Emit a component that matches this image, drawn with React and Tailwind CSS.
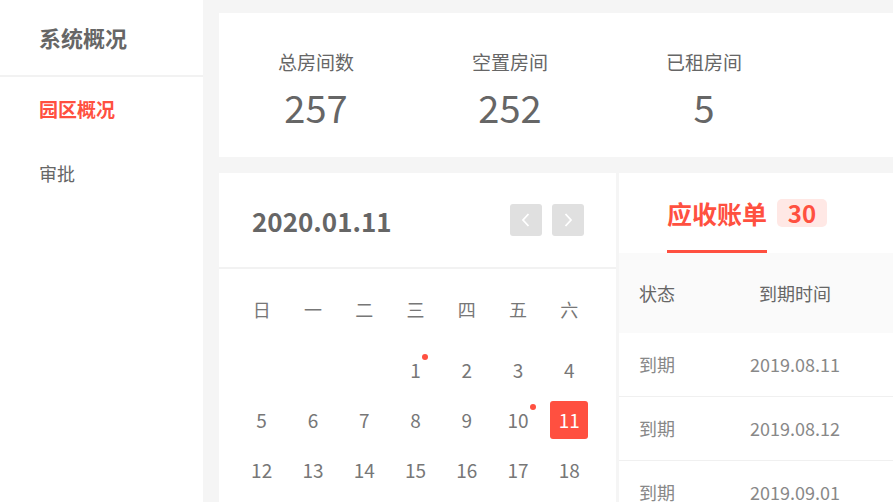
import React from "react";

const font = { fontFamily: '"Noto Sans CJK SC", "Noto Sans", sans-serif' };

const weeks = ["日", "一", "二", "三", "四", "五", "六"];
const days = [
  null, null, null, 1, 2, 3, 4,
  5, 6, 7, 8, 9, 10, 11,
  12, 13, 14, 15, 16, 17, 18,
];
const dots = [1, 10];

const rows = [
  ["到期", "2019.08.11"],
  ["到期", "2019.08.12"],
  ["到期", "2019.09.01"],
];

function Stat({ label, value }) {
  return (
    <div className="w-[194px] flex flex-col items-center">
      <div className="text-[19px] leading-[24px] text-[#666]">{label}</div>
      <div className="text-[38px] leading-[46px] mt-[10px] text-[#666]">{value}</div>
    </div>
  );
}

export default function App() {
  return (
    <div
      className="w-[893px] h-[502px] overflow-hidden flex bg-[#f5f5f5]"
      style={font}
    >
      {/* Sidebar */}
      <div className="w-[203px] shrink-0 bg-white h-full">
        <div className="h-[75px] flex items-center pl-[39px] text-[22px] font-bold text-[#666]">
          系统概况
        </div>
        <div className="h-[2px] bg-[#f2f2f2]" />
        <div className="h-[64px] flex items-center pl-[39px] text-[19px] font-bold text-[#ff5040]">
          园区概况
        </div>
        <div className="h-[64px] flex items-center pl-[39px] text-[18px] text-[#666]">
          审批
        </div>
      </div>

      {/* Main */}
      <div className="flex-1 pl-[16px] pt-[13px] flex flex-col gap-[16px] min-w-0">
        <div className="h-[144px] shrink-0 bg-white flex items-start pt-[37px]">
          <Stat label="总房间数" value="257" />
          <Stat label="空置房间" value="252" />
          <Stat label="已租房间" value="5" />
        </div>

        <div className="flex gap-[3px] flex-1 min-h-0">
          {/* Calendar */}
          <div className="w-[397px] shrink-0 bg-white">
            <div className="h-[94px] flex items-center justify-between pl-[33px] pr-[32px]">
              <div className="text-[26px] font-bold text-[#666]">2020.01.11</div>
              <div className="flex gap-[10px]">
                <div className="w-[32px] h-[32px] rounded-[3px] bg-[#e0e0e0] flex items-center justify-center">
                  <svg width="10" height="16" viewBox="0 0 10 16" fill="none">
                    <path d="M7.5 2 L2 8 L7.5 14" stroke="white" strokeWidth="1.8" />
                  </svg>
                </div>
                <div className="w-[32px] h-[32px] rounded-[3px] bg-[#e0e0e0] flex items-center justify-center">
                  <svg width="10" height="16" viewBox="0 0 10 16" fill="none">
                    <path d="M2.5 2 L8 8 L2.5 14" stroke="white" strokeWidth="1.8" />
                  </svg>
                </div>
              </div>
            </div>
            <div className="h-[2px] bg-[#f2f2f2]" />
            <div className="pl-[17px] pr-[21px] pt-[20px]">
              <div className="grid grid-cols-7 h-[40px] items-center text-center text-[18px] text-[#777]">
                {weeks.map((w) => (
                  <div key={w}>{w}</div>
                ))}
              </div>
              <div className="grid grid-cols-7 mt-[16px]">
                {days.map((d, i) => (
                  <div key={i} className="h-[50px] flex items-center justify-center">
                    {d === 11 ? (
                      <div className="w-[38px] h-[38px] rounded-[3px] bg-[#ff5040] text-white flex items-center justify-center text-[19px]">
                        11
                      </div>
                    ) : d ? (
                      <span className="relative text-[19px] text-[#777] leading-[24px]">
                        {d}
                        {dots.includes(d) && (
                          <span className="absolute w-[6px] h-[6px] rounded-full bg-[#ff5040] right-[-7px] top-[-4px]" />
                        )}
                      </span>
                    ) : null}
                  </div>
                ))}
              </div>
            </div>
          </div>

          {/* Bills */}
          <div className="flex-1 bg-white min-w-0">
            <div className="h-[80px] flex items-end pl-[48px]">
              <div className="flex items-center h-full">
                <div className="relative h-full flex items-center">
                  <span className="text-[25px] font-bold text-[#ff5040] leading-[32px]">应收账单</span>
                  <span className="absolute left-0 right-0 bottom-0 h-[3px] bg-[#ff5040]" />
                </div>
                <span className="ml-[10px] w-[50px] h-[28px] rounded-[5px] bg-[#ffe8e5] text-[#ff5040] text-[24px] font-bold flex items-center justify-center leading-none">
                  30
                </span>
              </div>
            </div>
            <div className="h-[80px] bg-[#fafafa] flex items-center text-[18px] text-[#666]">
              <div className="w-[116px] pl-[20px]">状态</div>
              <div className="w-[120px] text-center">到期时间</div>
            </div>
            {rows.map((r, i) => (
              <div
                key={i}
                className="h-[64px] flex items-center text-[18px] text-[#888] border-b border-[#f0f0f0]"
              >
                <div className="w-[116px] pl-[20px]">{r[0]}</div>
                <div className="w-[120px] text-center">{r[1]}</div>
              </div>
            ))}
          </div>
        </div>
      </div>
    </div>
  );
}
